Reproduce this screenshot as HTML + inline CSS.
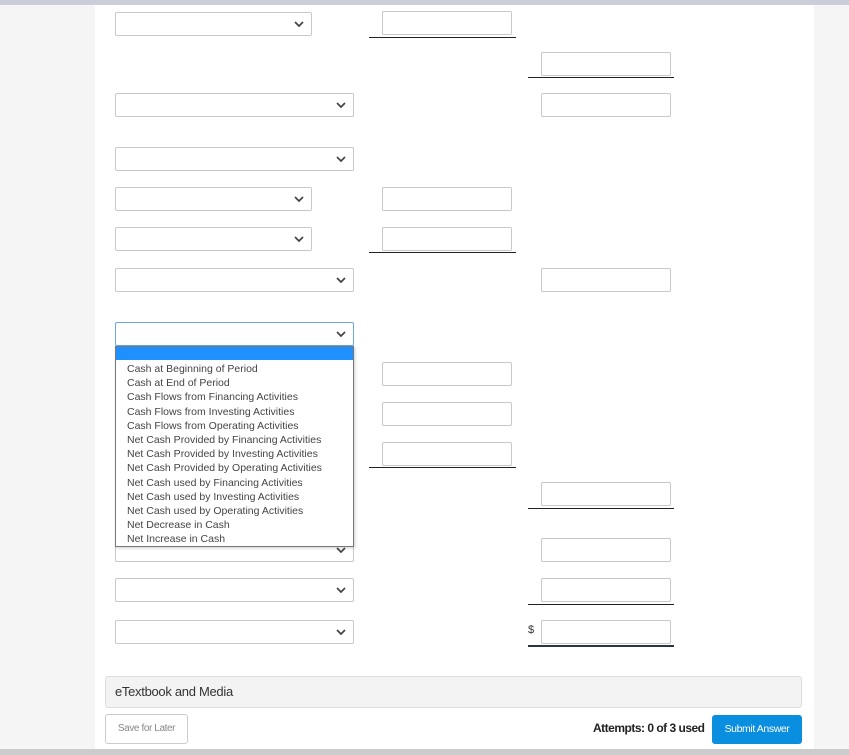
<!DOCTYPE html>
<html><head><style>
body{margin:0;width:849px;height:755px;background:#f5f5f5;position:relative;overflow:hidden;font-family:"Liberation Sans",sans-serif}
.top{position:absolute;left:0;top:0;width:849px;height:5px;background:#c9ced9}
.main{position:absolute;left:95px;top:5px;width:719px;height:744px;background:#fff}
.bot{position:absolute;left:0;top:749px;width:849px;height:6px;background:#cccccc}
.s,.i{position:absolute;box-sizing:border-box;height:24px;border:1px solid #c8c8c8;background:#fff;border-radius:2px}
.s svg{position:absolute;right:7px;top:8px}
.i{width:130px}
.l{position:absolute;height:1px;background:#222}
.dd{position:absolute;left:115px;top:346px;width:239px;height:201px;box-sizing:border-box;border:1px solid #777;background:#fff;font-size:10.5px;color:#444;box-shadow:1px 1px 3px rgba(0,0,0,.2)}
.dd .h{height:13px;background:#1e90ff;margin-bottom:2px}
.dd div.o{height:14.2px;line-height:14px;padding-left:11px;white-space:nowrap}
</style></head><body>
<div class="top"></div><div class="main"></div><div class="bot"></div>

<div class="s" style="left:115px;top:12px;width:197px"><svg width="10" height="7"><path d="M1 1L5 5L9 1" stroke="#444" stroke-width="1.7" fill="none"/></svg></div>
<div class="s" style="left:115px;top:93px;width:239px"><svg width="10" height="7"><path d="M1 1L5 5L9 1" stroke="#444" stroke-width="1.7" fill="none"/></svg></div>
<div class="s" style="left:115px;top:147px;width:239px"><svg width="10" height="7"><path d="M1 1L5 5L9 1" stroke="#444" stroke-width="1.7" fill="none"/></svg></div>
<div class="s" style="left:115px;top:187px;width:197px"><svg width="10" height="7"><path d="M1 1L5 5L9 1" stroke="#444" stroke-width="1.7" fill="none"/></svg></div>
<div class="s" style="left:115px;top:227px;width:197px"><svg width="10" height="7"><path d="M1 1L5 5L9 1" stroke="#444" stroke-width="1.7" fill="none"/></svg></div>
<div class="s" style="left:115px;top:268px;width:239px"><svg width="10" height="7"><path d="M1 1L5 5L9 1" stroke="#444" stroke-width="1.7" fill="none"/></svg></div>
<div class="s" style="left:115px;top:322px;width:239px;border-color:#6aa6e8"><svg width="10" height="7"><path d="M1 1L5 5L9 1" stroke="#444" stroke-width="1.7" fill="none"/></svg></div>
<div class="s" style="left:115px;top:538px;width:239px"><svg width="10" height="7"><path d="M1 1L5 5L9 1" stroke="#444" stroke-width="1.7" fill="none"/></svg></div>
<div class="s" style="left:115px;top:578px;width:239px"><svg width="10" height="7"><path d="M1 1L5 5L9 1" stroke="#444" stroke-width="1.7" fill="none"/></svg></div>
<div class="s" style="left:115px;top:620px;width:239px"><svg width="10" height="7"><path d="M1 1L5 5L9 1" stroke="#444" stroke-width="1.7" fill="none"/></svg></div>

<div class="i" style="left:382px;top:11px"></div>
<div class="i" style="left:382px;top:187px"></div>
<div class="i" style="left:382px;top:227px"></div>
<div class="i" style="left:382px;top:362px"></div>
<div class="i" style="left:382px;top:402px"></div>
<div class="i" style="left:382px;top:442px"></div>
<div class="l" style="left:369px;top:37px;width:147px"></div>
<div class="l" style="left:369px;top:252px;width:147px"></div>
<div class="l" style="left:369px;top:467px;width:147px"></div>

<div class="i" style="left:541px;top:52px"></div>
<div class="i" style="left:541px;top:93px"></div>
<div class="i" style="left:541px;top:268px"></div>
<div class="i" style="left:541px;top:482px"></div>
<div class="i" style="left:541px;top:538px"></div>
<div class="i" style="left:541px;top:578px"></div>
<div class="i" style="left:541px;top:620px"></div>
<div class="l" style="left:528px;top:77px;width:146px"></div>
<div class="l" style="left:528px;top:508px;width:146px"></div>
<div class="l" style="left:528px;top:604px;width:146px"></div>
<div class="l" style="left:528px;top:645px;width:146px;height:2px;background:#2b3440"></div>
<div style="position:absolute;left:528px;top:624px;font-size:11px;color:#333">$</div>

<div class="dd"><div class="h"></div>
<div class="o">Cash at Beginning of Period</div>
<div class="o">Cash at End of Period</div>
<div class="o">Cash Flows from Financing Activities</div>
<div class="o">Cash Flows from Investing Activities</div>
<div class="o">Cash Flows from Operating Activities</div>
<div class="o">Net Cash Provided by Financing Activities</div>
<div class="o">Net Cash Provided by Investing Activities</div>
<div class="o">Net Cash Provided by Operating Activities</div>
<div class="o">Net Cash used by Financing Activities</div>
<div class="o">Net Cash used by Investing Activities</div>
<div class="o">Net Cash used by Operating Activities</div>
<div class="o">Net Decrease in Cash</div>
<div class="o">Net Increase in Cash</div>
</div>

<div style="position:absolute;left:105px;top:676px;width:697px;height:32px;box-sizing:border-box;background:#f3f3f3;border:1px solid #ddd;border-radius:3px;font-size:13px;color:#333;line-height:30px;padding-left:9px;letter-spacing:-.3px">eTextbook and Media</div>
<div style="position:absolute;left:105px;top:714px;width:83px;height:30px;box-sizing:border-box;border:1px solid #ccc;border-radius:3px;font-size:10px;color:#888;line-height:28px;text-align:center;letter-spacing:-.4px">Save for Later</div>
<div style="position:absolute;left:593px;top:721px;font-size:12px;color:#222;font-weight:bold;letter-spacing:-.5px">Attempts: 0 of 3 used</div>
<div style="position:absolute;left:712px;top:715px;width:90px;height:29px;background:#0a8ee0;border-radius:3px;color:#fff;font-size:10.5px;line-height:28px;text-align:center;letter-spacing:-.4px">Submit Answer</div>
</body></html>
